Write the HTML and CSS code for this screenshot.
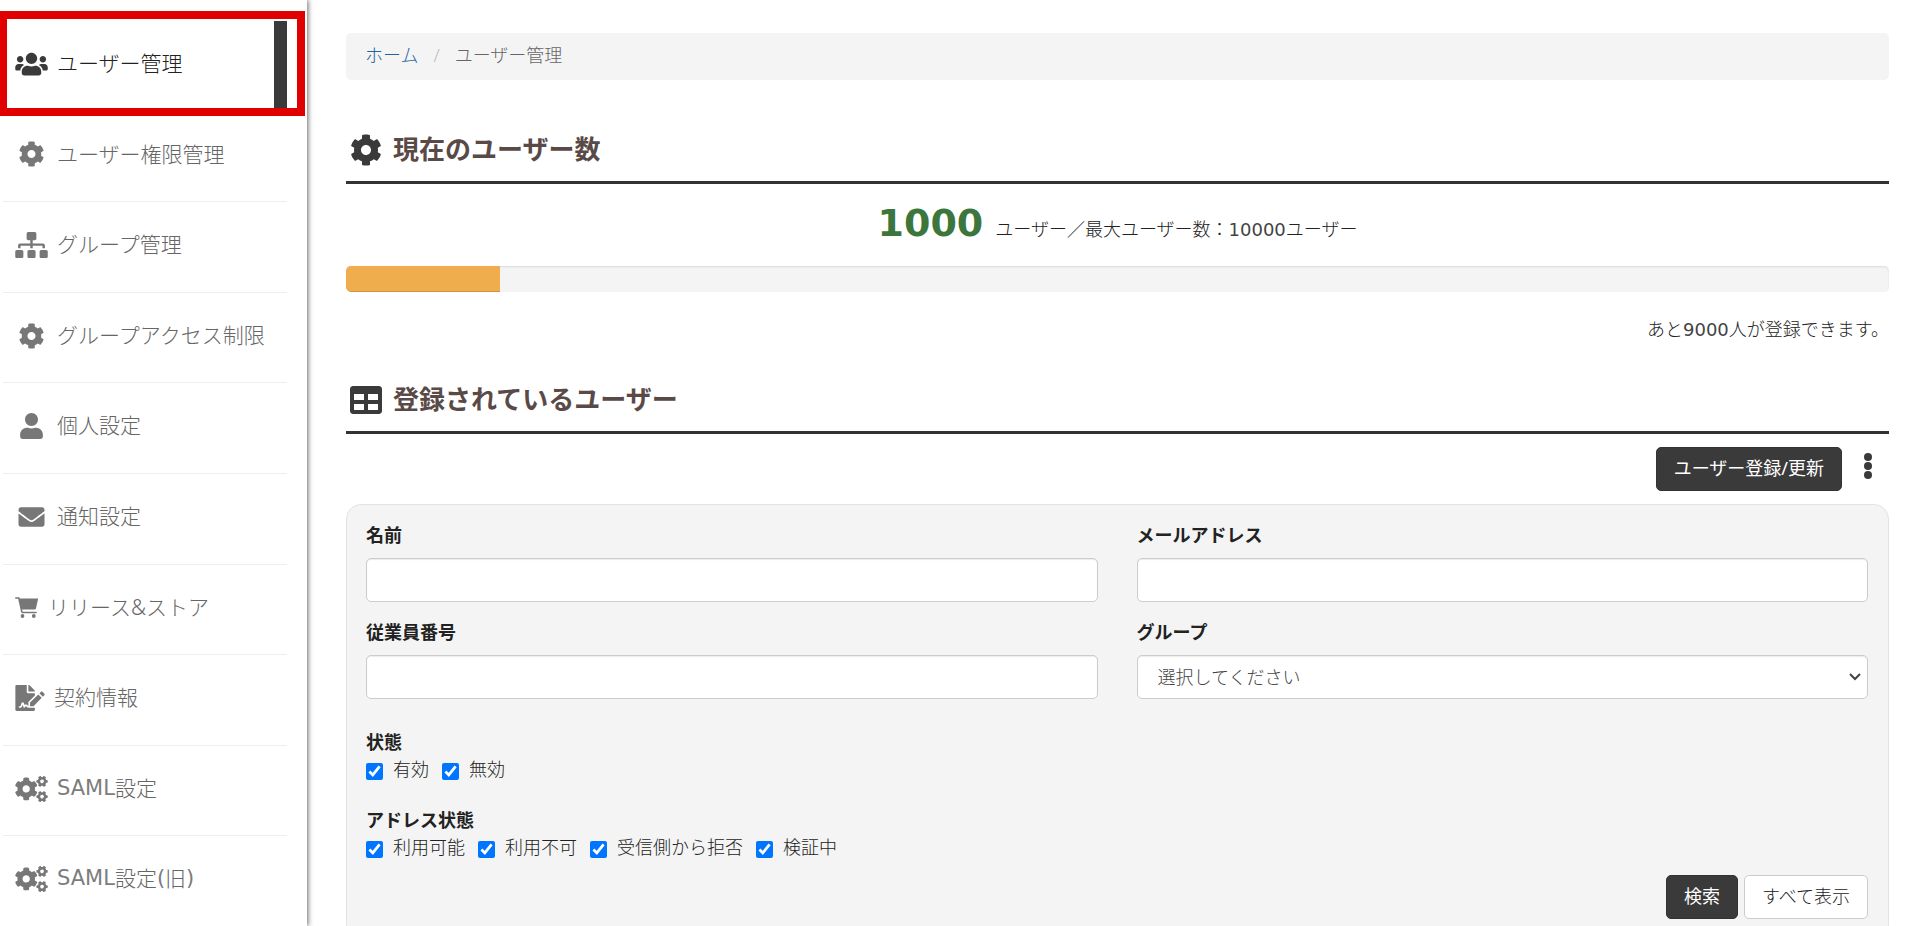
FILE: index.html
```html
<!DOCTYPE html>
<html lang="ja">
<head>
    <meta charset="UTF-8">
    <meta name="viewport" content="width=device-width, initial-scale=1.0">
    <title>ユーザー管理</title>
    <link rel="stylesheet" href="styles.css">
</head>
<body>
    <!-- アイコン定義 -->
    <svg class="sprite" aria-hidden="true">
        <symbol id="i-users" viewBox="0 0 640 512"><path d="M96 224c35.300 0 64-28.700 64-64s-28.700-64-64-64-64 28.700-64 64 28.700 64 64 64zm448 0c35.300 0 64-28.700 64-64s-28.700-64-64-64-64 28.700-64 64 28.700 64 64 64zm32 32h-64c-17.600 0-33.500 7.100-45.100 18.600 40.300 22.100 68.900 62 75.100 109.400h66c17.700 0 32-14.300 32-32v-32c0-35.300-28.700-64-64-64zm-256 0c61.900 0 112-50.100 112-112S381.900 32 320 32 208 82.100 208 144s50.100 112 112 112zm76.800 32h-8.300c-20.800 10-43.900 16-68.500 16s-47.600-6-68.500-16h-8.300C179.600 288 128 339.600 128 403.200V432c0 26.500 21.500 48 48 48h288c26.500 0 48-21.500 48-48v-28.800c0-63.600-51.600-115.200-115.200-115.200zm-223.700-13.400C161.500 263.100 145.600 256 128 256H64c-35.300 0-64 28.700-64 64v32c0 17.700 14.300 32 32 32h65.900c6.300-47.400 34.900-87.300 75.200-109.400z"/></symbol>
        <symbol id="i-cog" viewBox="0 0 512 512"><path d="M487.4 315.700l-42.600-24.600c4.300-23.200 4.300-47 0-70.200l42.600-24.600c4.900-2.800 7.100-8.600 5.500-14-11.100-35.600-30-67.800-54.700-94.600-3.800-4.100-10-5.100-14.800-2.300L380.800 110c-17.900-15.400-38.500-27.300-60.800-35.100V25.800c0-5.600-3.900-10.500-9.400-11.700-36.700-8.200-74.300-7.800-109.200 0-5.500 1.200-9.400 6.100-9.400 11.700V75c-22.200 7.900-42.800 19.800-60.800 35.100L88.700 85.500c-4.900-2.800-11-1.900-14.800 2.300-24.700 26.700-43.600 58.900-54.700 94.600-1.700 5.400.6 11.200 5.500 14L67.300 221c-4.300 23.200-4.300 47 0 70.200l-42.600 24.600c-4.900 2.800-7.100 8.600-5.500 14 11.100 35.600 30 67.800 54.700 94.600 3.800 4.100 10 5.100 14.800 2.300l42.600-24.600c17.900 15.400 38.500 27.300 60.800 35.100v49.200c0 5.600 3.900 10.500 9.400 11.700 36.700 8.200 74.300 7.800 109.200 0 5.500-1.200 9.400-6.100 9.400-11.700v-49.200c22.200-7.900 42.800-19.800 60.800-35.100l42.600 24.600c4.900 2.800 11 1.900 14.800-2.300 24.700-26.700 43.600-58.900 54.700-94.600 1.500-5.500-.7-11.300-5.600-14.100zM256 336c-44.100 0-80-35.900-80-80s35.900-80 80-80 80 35.900 80 80-35.900 80-80 80z"/></symbol>
        <symbol id="i-sitemap" viewBox="0 0 640 512"><path d="M128 352H32c-17.670 0-32 14.330-32 32v96c0 17.670 14.330 32 32 32h96c17.670 0 32-14.330 32-32v-96c0-17.670-14.330-32-32-32zm-24-80h192v48h48v-48h192v48h48v-57.590c0-21.170-17.230-38.410-38.410-38.410H344v-64h40c17.670 0 32-14.330 32-32V32c0-17.670-14.330-32-32-32H256c-17.670 0-32 14.330-32 32v96c0 17.670 14.330 32 32 32h40v64H94.410C73.230 224 56 241.230 56 262.410V320h48v-48zm264 80h-96c-17.670 0-32 14.330-32 32v96c0 17.670 14.330 32 32 32h96c17.670 0 32-14.330 32-32v-96c0-17.670-14.330-32-32-32zm240 0h-96c-17.670 0-32 14.330-32 32v96c0 17.670 14.330 32 32 32h96c17.670 0 32-14.330 32-32v-96c0-17.670-14.330-32-32-32z"/></symbol>
        <symbol id="i-user" viewBox="0 0 448 512"><path d="M224 256c70.700 0 128-57.300 128-128S294.700 0 224 0 96 57.300 96 128s57.300 128 128 128zm89.600 32h-16.700c-22.200 10.200-46.900 16-72.900 16s-50.600-5.800-72.900-16h-16.700C60.200 288 0 348.200 0 422.400V464c0 26.500 21.500 48 48 48h352c26.500 0 48-21.500 48-48v-41.600c0-74.200-60.200-134.400-134.400-134.400z"/></symbol>
        <symbol id="i-envelope" viewBox="0 0 512 512"><path d="M502.300 190.800c3.900-3.100 9.700-.2 9.700 4.700V400c0 26.500-21.500 48-48 48H48c-26.500 0-48-21.500-48-48V195.600c0-5 5.700-7.800 9.700-4.700 22.400 17.400 52.100 39.500 154.100 113.600 21.100 15.400 56.700 47.800 92.200 47.600 35.700.3 72-32.800 92.300-47.600 102-74.100 131.600-96.300 154-113.700zM256 320c23.200.4 56.600-29.200 73.400-41.400 132.700-96.300 142.800-104.700 173.400-128.700 5.800-4.500 9.200-11.500 9.200-18.900v-19c0-26.500-21.500-48-48-48H48c-26.500 0-48 21.500-48 48v19c0 7.400 3.400 14.300 9.200 18.900 30.600 23.900 40.700 32.400 173.400 128.700 16.800 12.200 50.200 41.800 73.400 41.400z"/></symbol>
        <symbol id="i-cart" viewBox="0 0 24 21"><path d="M4 1.500h19.200L21 11.200q-.3 1.300-1.600 1.300H6.300z"/><path d="M.8 1h3l3 13.600q.2.900 1.200.9h13" fill="none" stroke="currentColor" stroke-width="1.600" stroke-linecap="round"/><circle cx="7.500" cy="19" r="1.900"/><circle cx="18.800" cy="19" r="1.900"/></symbol>
        <symbol id="i-signature" viewBox="0 0 576 512"><path d="M218.170 424.140c-2.950-5.920-8.090-6.520-10.170-6.520s-7.220.59-10.020 6.190l-7.670 15.340c-6.370 12.780-25.030 11.370-29.480-2.090L144 386.590l-10.610 31.880c-5.890 17.660-22.380 29.530-41 29.530H80c-8.840 0-16-7.160-16-16s7.160-16 16-16h12.390c4.830 0 9.110-3.080 10.640-7.660l18.190-54.640c3.300-9.810 12.440-16.410 22.780-16.410s19.480 6.590 22.770 16.410l13.880 41.640c19.750-16.190 54.060-9.700 66 14.160 1.890 3.780 5.490 5.950 9.360 6.260v-82.120l128-127.090V160H248c-13.200 0-24-10.800-24-24V0H24C10.700 0 0 10.700 0 24v464c0 13.300 10.700 24 24 24h336c13.300 0 24-10.700 24-24v-40l-128-.11c-16.120-.31-30.580-9.280-37.830-23.750zM384 121.900c0-6.300-2.500-12.400-7-16.900L279.100 7c-4.500-4.500-10.600-7-17-7H256v128h128v-6.100zm-96 225.060V416h68.990l161.680-162.780-67.880-67.880L288 346.960zm280.540-179.630l-31.870-31.870c-9.940-9.940-26.070-9.940-36.010 0l-27.250 27.250 67.880 67.880 27.250-27.250c9.950-9.940 9.950-26.070 0-36.010z"/></symbol>
        <symbol id="i-cogs" viewBox="0 0 640 512">
            <path id="small-cog" d="M512.100 191l-8.200 14.300c-3 5.300-9.400 7.500-15.100 5.400-11.800-4.400-22.600-10.700-32.100-18.600-4.600-3.800-5.800-10.500-2.800-15.700l8.200-14.300c-6.900-8-12.300-17.300-15.900-27.400h-16.500c-6 0-11.200-4.300-12.200-10.300-2-12-2.100-24.600 0-37.100 1-6 6.200-10.400 12.200-10.400h16.500c3.600-10.100 9-19.400 15.900-27.400l-8.200-14.300c-3-5.200-1.900-11.900 2.800-15.700 9.500-7.900 20.400-14.200 32.100-18.600 5.700-2.100 12.100.1 15.100 5.400l8.200 14.300c10.500-1.900 21.200-1.900 31.700 0L552 6.300c3-5.300 9.400-7.500 15.100-5.400 11.800 4.400 22.600 10.700 32.100 18.600 4.600 3.800 5.800 10.500 2.800 15.700l-8.200 14.300c6.900 8 12.300 17.300 15.900 27.400h16.500c6 0 11.200 4.300 12.200 10.300 2 12 2.100 24.600 0 37.100-1 6-6.200 10.400-12.200 10.400h-16.500c-3.600 10.100-9 19.400-15.900 27.400l8.200 14.300c3 5.200 1.900 11.900-2.800 15.700-9.500 7.900-20.400 14.200-32.100 18.600-5.700 2.100-12.100-.1-15.100-5.400l-8.200-14.300c-10.400 1.900-21.200 1.900-31.700 0zm-10.500-58.800c38.500 29.600 82.400-14.300 52.800-52.800-38.500-29.700-82.400 14.300-52.800 52.800z"/>
            <use href="#small-cog" y="300"/>
            <path d="M386.300 286.100l33.700 16.800c10.100 5.800 14.500 18.100 10.500 29.100-8.900 24.200-26.400 46.400-42.600 65.800-7.400 8.900-20.200 11.100-30.300 5.300l-29.100-16.800c-16 13.700-34.600 24.600-54.900 31.700v33.600c0 11.600-8.300 21.600-19.700 23.600-24.600 4.200-50.400 4.400-75.900 0-11.500-2-20-11.900-20-23.600V418c-20.300-7.200-38.900-18-54.900-31.700L74 403c-10 5.800-22.900 3.600-30.300-5.300-16.200-19.400-33.300-41.600-42.200-65.700-4-10.900.4-23.200 10.500-29.100l33.300-16.800c-3.900-20.900-3.900-42.400 0-63.400L12 205.800c-10.100-5.800-14.600-18.100-10.500-29 8.900-24.200 26-46.400 42.200-65.800 7.400-8.900 20.200-11.100 30.300-5.300l29.100 16.800c16-13.700 34.600-24.600 54.900-31.700V57.100c0-11.500 8.200-21.500 19.600-23.500 24.600-4.200 50.500-4.400 76-.1 11.500 2 20 11.900 20 23.600v33.600c20.300 7.200 38.900 18 54.900 31.700l29.100-16.800c10-5.800 22.900-3.600 30.300 5.300 16.200 19.400 33.200 41.600 42.100 65.800 4 10.900.1 23.200-10 29.100l-33.700 16.800c3.900 21 3.900 42.500 0 63.500zm-117.600 21.100c59.200-77-28.700-164.900-105.700-105.700-59.200 77 28.700 164.900 105.700 105.700z"/>
        </symbol>
        <symbol id="i-table" viewBox="0 0 512 512"><path d="M464 32H48C21.490 32 0 53.490 0 80v352c0 26.510 21.490 48 48 48h416c26.510 0 48-21.490 48-48V80c0-26.510-21.490-48-48-48zM224 416H64v-96h160v96zm0-160H64v-96h160v96zm224 160H288v-96h160v96zm0-160H288v-96h160v96z"/></symbol>
    </svg>

    <div class="layout">
        <nav class="sidebar">
            <ul>
                <li class="active"><a href="#"><svg class="icon"><use href="#i-users"/></svg>ユーザー管理</a></li>
                <li><a href="#"><svg class="icon"><use href="#i-cog"/></svg>ユーザー権限管理</a></li>
                <li><a href="#"><svg class="icon"><use href="#i-sitemap"/></svg>グループ管理</a></li>
                <li><a href="#"><svg class="icon"><use href="#i-cog"/></svg>グループアクセス制限</a></li>
                <li><a href="#"><svg class="icon"><use href="#i-user"/></svg>個人設定</a></li>
                <li><a href="#"><svg class="icon"><use href="#i-envelope"/></svg>通知設定</a></li>
                <li><a href="#"><svg class="icon icon-cart"><use href="#i-cart"/></svg>リリース&amp;ストア</a></li>
                <li><a href="#"><svg class="icon icon-signature"><use href="#i-signature"/></svg>契約情報</a></li>
                <li><a href="#"><svg class="icon"><use href="#i-cogs"/></svg><span class="en">SAML</span>設定</a></li>
                <li><a href="#"><svg class="icon"><use href="#i-cogs"/></svg><span class="en">SAML</span>設定<span class="en">(</span>旧<span class="en">)</span></a></li>
            </ul>
        </nav>

        <main class="content">
            <ol class="breadcrumb">
                <li><a href="#">ホーム</a></li>
                <li>ユーザー管理</li>
            </ol>

            <section>
                <h2><svg class="heading-icon"><use href="#i-cog"/></svg>現在のユーザー数</h2>
                <p class="user-count"><strong>1000</strong>ユーザー／最大ユーザー数：<span class="en">10000</span>ユーザー</p>
                <div class="progress">
                    <div class="progress-bar" style="width: 10%"></div>
                </div>
                <p class="remaining">あと<span class="en">9000</span>人が登録できます。</p>
            </section>

            <section>
                <h2><svg class="heading-icon"><use href="#i-table"/></svg>登録されているユーザー</h2>
                <div class="toolbar">
                    <button type="button" class="btn btn-dark">ユーザー登録/更新</button>
                    <button type="button" class="btn-menu" aria-label="メニュー">
                        <svg width="8" height="26" viewBox="0 0 8 26"><circle cx="4" cy="4" r="4"/><circle cx="4" cy="13" r="4"/><circle cx="4" cy="22" r="4"/></svg>
                    </button>
                </div>

                <form class="search-form">
                    <div class="fields">
                        <div class="form-group">
                            <label for="name">名前</label>
                            <input type="text" id="name" name="name">
                        </div>
                        <div class="form-group">
                            <label for="email">メールアドレス</label>
                            <input type="text" id="email" name="email">
                        </div>
                        <div class="form-group">
                            <label for="employee-no">従業員番号</label>
                            <input type="text" id="employee-no" name="employee-no">
                        </div>
                        <div class="form-group">
                            <label for="group">グループ</label>
                            <select id="group" name="group">
                                <option>選択してください</option>
                            </select>
                        </div>
                    </div>

                    <fieldset>
                        <legend>状態</legend>
                        <div class="checks">
                            <label><input type="checkbox" checked>有効</label>
                            <label><input type="checkbox" checked>無効</label>
                        </div>
                    </fieldset>
                    <fieldset>
                        <legend>アドレス状態</legend>
                        <div class="checks">
                            <label><input type="checkbox" checked>利用可能</label>
                            <label><input type="checkbox" checked>利用不可</label>
                            <label><input type="checkbox" checked>受信側から拒否</label>
                            <label><input type="checkbox" checked>検証中</label>
                        </div>
                    </fieldset>

                    <div class="form-actions">
                        <button type="submit" class="btn btn-dark">検索</button>
                        <button type="button" class="btn btn-default">すべて表示</button>
                    </div>
                </form>
            </section>
        </main>
    </div>
</body>
</html>
```
FILE: styles.css
```css
* {
    box-sizing: border-box;
}
body {
    margin: 0;
    font-family: "Noto Sans", "Noto Sans CJK JP", sans-serif;
    font-size: 18px;
    font-weight: 300;
    line-height: 26px;
    color: #222;
    background-color: #fff;
}
ul, ol, p, h2 {
    margin: 0;
    padding: 0;
    list-style: none;
}
a {
    color: #23639c;
    text-decoration: none;
}
svg {
    fill: currentColor;
}
.sprite {
    display: none;
}
/* 英数字 */
.en {
    font-family: "DejaVu Sans", sans-serif;
    font-weight: 400;
    opacity: 0.85;
}
.layout {
    display: flex;
    height: 100vh;
    overflow: hidden;
}

/* サイドバー */
.sidebar {
    flex: 0 0 307px;
    padding: 21px 20px 0 3px;
    box-shadow: 1px 0 5px rgba(0,0,0,0.6);
}
.sidebar li {
    position: relative;
    border-bottom: 1px solid #eee;
}
.sidebar a {
    display: flex;
    align-items: center;
    padding: 28px 0 32px 12px;
    font-size: 21px;
    line-height: 1.41;
    color: #666;
    white-space: nowrap;
}
.sidebar .active a {
    color: #222;
    border-right: 13px solid #3a3a3a;
}
.sidebar .active::after {
    content: "";
    position: absolute;
    top: -10px;
    left: -4px;
    right: -18px;
    bottom: -5px;
    border: 8px solid #e00000;
    pointer-events: none;
}
.icon {
    width: 33px;
    height: 26px;
    margin-right: 9px;
    color: #777;
}
.active .icon {
    color: #3a3a3a;
}
.icon-cart {
    width: 24px;
    height: 21px;
}
.icon-signature {
    width: 30px;
}

/* メイン */
.content {
    flex: 1;
    min-width: 0;
    padding: 33px 31px 0 39px;
    overflow-y: auto;
    scrollbar-width: none;
}
.breadcrumb {
    display: flex;
    padding: 9px 19px 12px;
    margin-bottom: 44px;
    background-color: #f4f4f4;
    border-radius: 5px;
    color: #666;
}
.breadcrumb li + li::before {
    content: "/";
    padding: 0 15px;
    color: #bbb;
}
h2, strong, legend, .form-group label {
    font-family: "DejaVu Sans", "Noto Sans CJK JP", sans-serif;
    font-weight: bold;
}
h2 {
    display: flex;
    align-items: center;
    gap: 11px;
    padding: 6px 4px 11px;
    border-bottom: 3px solid #333;
    font-size: 26px;
    line-height: 40px;
    color: #594a47;
}
.heading-icon {
    width: 32px;
    height: 32px;
    color: #3a3a3a;
}
.user-count {
    padding: 14px 0 11px;
    text-align: center;
    line-height: 50px;
}
.user-count strong {
    margin-right: 12px;
    font-size: 38px;
    color: #3c763d;
}
.progress {
    height: 26px;
    overflow: hidden;
    background-color: #f4f4f4;
    border-radius: 5px;
    box-shadow: inset 0 1px 2px rgba(0,0,0,0.1);
}
.progress-bar {
    height: 100%;
    background-color: #f0ad4e;
    box-shadow: inset 0 -1px 0 rgba(0,0,0,0.15);
}
.remaining {
    padding: 24px 0 31px;
    text-align: right;
}
.toolbar {
    display: flex;
    justify-content: flex-end;
    gap: 10px;
    padding: 13px 5px 13px 0;
}
.btn {
    height: 44px;
    padding: 0 17px 2px;
    border: 1px solid #333;
    border-radius: 5px;
    font: inherit;
    cursor: pointer;
}
.btn-dark {
    color: #fff;
    background-color: #3a3a3a;
    font-weight: 400;
}
.btn-default {
    color: #222;
    background-color: #fff;
    border-color: #ccc;
}
.btn-menu {
    display: flex;
    align-items: center;
    padding: 0 12px 6px;
    border: none;
    background: none;
    color: #3a3a3a;
    cursor: pointer;
}

/* 検索フォーム */
.search-form {
    padding: 18px 20px 20px 19px;
    border: 1px solid #e3e3e3;
    border-radius: 15px;
    background-color: #f4f4f4;
}
.fields {
    display: grid;
    grid-template-columns: 1fr 1fr;
    column-gap: 39px;
    margin-bottom: 13px;
}
.form-group {
    margin-bottom: 18px;
}
.form-group label {
    display: block;
    margin-bottom: 9px;
}
.form-group input,
.form-group select {
    display: block;
    width: 100%;
    height: 44px;
    padding: 0 20px;
    border: 1px solid #ccc;
    border-radius: 5px;
    background-color: #fff;
    font: inherit;
    color: #444;
    box-shadow: inset 0 1px 1px rgba(0,0,0,0.08);
}
.form-group select {
    appearance: none;
    background-image: url("data:image/svg+xml,%3Csvg xmlns='http://www.w3.org/2000/svg' width='12' height='8'%3E%3Cpath d='M1 1l5 5 5-5' fill='none' stroke='%23444' stroke-width='2'/%3E%3C/svg%3E");
    background-repeat: no-repeat;
    background-position: right 6px center;
}
fieldset {
    margin: 0 0 26px;
    padding: 0;
    border: none;
}
fieldset:last-of-type {
    margin-bottom: 15px;
}
legend {
    padding: 0;
}
.checks {
    display: flex;
    gap: 13px;
}
.checks label {
    display: flex;
    align-items: center;
    gap: 10px;
}
.checks input {
    width: 17px;
    height: 17px;
    margin: 4px 0 0;
}
.form-actions {
    display: flex;
    justify-content: flex-end;
    gap: 6px;
}
```
